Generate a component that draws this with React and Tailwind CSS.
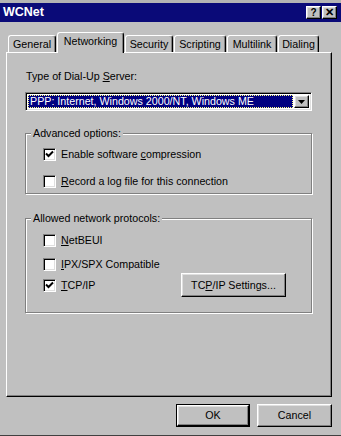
import React from 'react';

const raised = 'border border-t-white border-l-white border-r-black border-b-black shadow-[inset_-1px_-1px_0_#808080,inset_1px_1px_0_#dfdfdf]';

const CheckBox = ({ checked }) => (
    <div className="w-[13px] h-[13px] bg-white border border-t-[#808080] border-l-[#808080] border-r-white border-b-white shadow-[inset_1px_1px_0_#000,inset_-1px_-1px_0_#dfdfdf] flex items-center justify-center shrink-0">
        {checked && (
            <svg width="9" height="9" viewBox="0 0 9 9">
                <path d="M1 3.5 L3.5 6 L8 1.5" fill="none" stroke="#000" strokeWidth="2" />
            </svg>
        )}
    </div>
);

const Row = ({ checked, children, className = '' }) => (
    <div className={`flex items-center gap-[5px] h-[13px] ${className}`}>
        <CheckBox checked={checked} />
        <span className="leading-[13px]">{children}</span>
    </div>
);

const Group = ({ label, className = '', children }) => (
    <div className={`relative border border-[#808080] shadow-[inset_1px_1px_0_#fff,1px_1px_0_#fff] ${className}`}>
        <span className="absolute left-[5px] top-[-7px] px-[2px] bg-[#c0c0c0] leading-[13px]">{label}</span>
        {children}
    </div>
);

const tabs = [
    { name: 'General', w: 'w-[48px]' },
    { name: 'Networking', w: 'w-[67px]', active: true },
    { name: 'Security', w: 'w-[48px]' },
    { name: 'Scripting', w: 'w-[52px]' },
    { name: 'Multilink', w: 'w-[50px]' },
    { name: 'Dialing', w: 'w-[41px]' },
];

const App = () => {
    return (
        <div className="w-[341px] h-[436px] bg-[#c0c0c0] flex flex-col overflow-hidden text-[10.7px] text-black font-['Liberation_Sans',Arial,sans-serif] border-b border-[#404040]">
            <div className="h-[3px] bg-[#b4b4b4] shrink-0" />

            <div className="h-[19px] bg-[#0a0a78] flex items-center justify-between pl-[3px] pr-[4px] shrink-0">
                <span className="text-white font-bold text-[12.5px] leading-none">WCNet</span>
                <div className="flex gap-[1px]">
                    <div className={`w-[15px] h-[13px] bg-[#c0c0c0] ${raised} flex items-center justify-center text-[10px] font-bold leading-none`}>?</div>
                    <div className={`w-[15px] h-[13px] bg-[#c0c0c0] ${raised} flex items-center justify-center text-[11px] font-bold leading-none`}>✕</div>
                </div>
            </div>

            <div className="flex flex-col pl-[6px] pr-[9px] pt-[10px]">
                <div className="flex items-end gap-[1px] pl-[2px] h-[20px]">
                    {tabs.map((t) => (
                        <div
                            key={t.name}
                            className={`${t.w} bg-[#c0c0c0] border-t border-l border-white border-r border-r-black rounded-t-[3px] shadow-[inset_-1px_0_0_#808080] flex items-center justify-center leading-[13px] ${t.active ? 'h-[21px] mb-[-1px] relative z-10 pb-[3px]' : 'h-[17px]'}`}
                        >
                            {t.name}
                        </div>
                    ))}
                </div>

                <div className="h-[345px] border border-t-white border-l-white border-r-black border-b-black shadow-[inset_-1px_-1px_0_#808080] pt-[17px] pl-[18px] pr-[19px]">
                    <div className="pl-[1px] leading-[13px]">
                        Type of Dial-Up <span className="underline">S</span>erver:
                    </div>

                    <div className="mt-[9px] h-[19px] bg-white border border-t-[#808080] border-l-[#808080] border-r-white border-b-white shadow-[inset_1px_1px_0_#000,inset_-1px_-1px_0_#dfdfdf] flex items-center p-[2px]">
                        <div className="flex-1 h-full bg-[#000080] text-white outline-1 outline-dotted outline-[#ffff80] -outline-offset-1 flex items-center pl-[2px] leading-none">
                            PPP: Internet, Windows 2000/NT, Windows ME
                        </div>
                        <div className={`w-[15px] h-full ml-[1px] bg-[#c0c0c0] ${raised} flex items-center justify-center`}>
                            <svg width="7" height="4" viewBox="0 0 7 4">
                                <path d="M0 0 H7 L3.5 4 Z" fill="#000" />
                            </svg>
                        </div>
                    </div>

                    <Group label="Advanced options:" className="mt-[22px] h-[61px] pt-[14px] pl-[17px]">
                        <Row checked>Enable software <span className="underline">c</span>ompression</Row>
                        <Row className="mt-[14px]"><span className="underline">R</span>ecord a log file for this connection</Row>
                    </Group>

                    <Group label="Allowed network protocols:" className="mt-[24px] h-[95px] pt-[15px] pl-[17px]">
                        <Row><span className="underline">N</span>etBEUI</Row>
                        <Row className="mt-[11px]"><span className="underline">I</span>PX/SPX Compatible</Row>
                        <div className="flex items-center mt-[2px]">
                            <Row checked className="w-[138px]"><span className="underline">T</span>CP/IP</Row>
                            <div className={`w-[105px] h-[24px] bg-[#c0c0c0] ${raised} flex items-center justify-center leading-none`}>
                                TC<span className="underline">P</span>/IP Settings...
                            </div>
                        </div>
                    </Group>
                </div>

                <div className="flex justify-end gap-[7px] mt-[7px]">
                    <div className="w-[74px] h-[23px] border border-black">
                        <div className={`w-full h-full bg-[#c0c0c0] ${raised} flex items-center justify-center leading-none`}>OK</div>
                    </div>
                    <div className={`w-[75px] h-[23px] bg-[#c0c0c0] ${raised} flex items-center justify-center leading-none`}>Cancel</div>
                </div>
            </div>
        </div>
    );
};

export default App;
